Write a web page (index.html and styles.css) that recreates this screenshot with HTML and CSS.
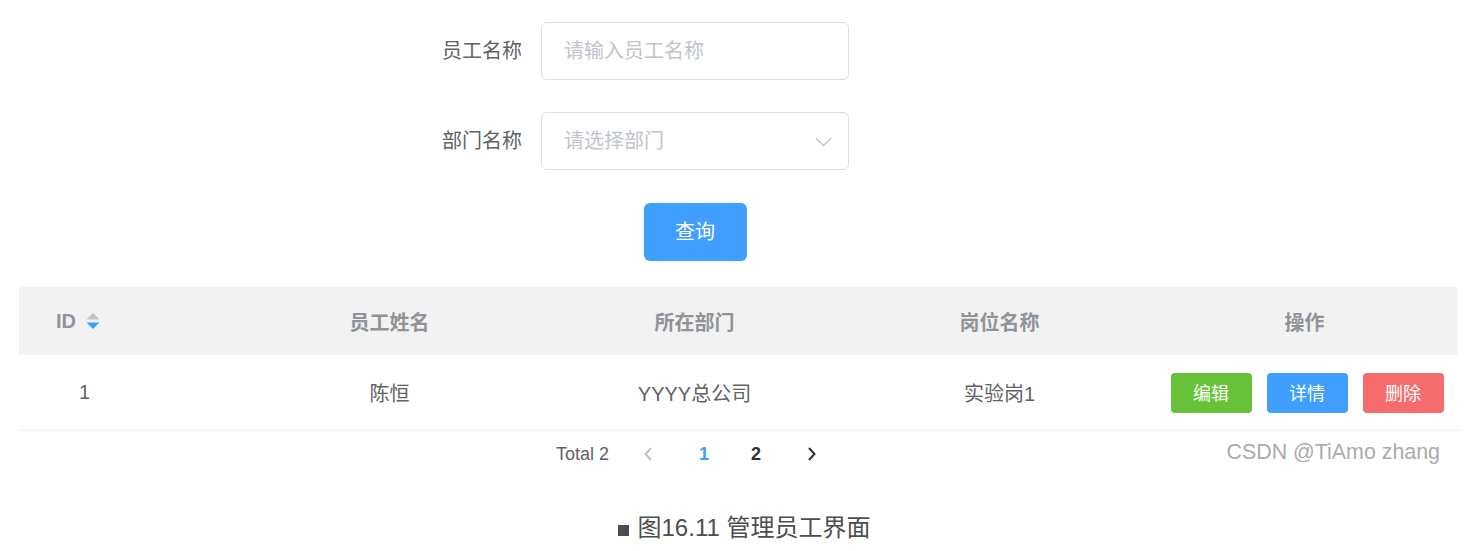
FILE: index.html
```html
<!DOCTYPE html>
<html lang="zh-CN">
<head>
<meta charset="utf-8">
<title>管理员工界面</title>
<link rel="stylesheet" href="styles.css">
</head>
<body>
<div class="page">
  <form class="search">
    <label class="label">员工名称</label>
    <div class="input"><span class="placeholder">请输入员工名称</span></div>
    <label class="label">部门名称</label>
    <div class="input select">
      <span class="placeholder">请选择部门</span>
      <svg class="chevron" width="17" height="10" viewBox="0 0 17 10"><path d="M1 1.2 L8.5 8.5 L16 1.2" fill="none" stroke="#c0c4cc" stroke-width="1.5"/></svg>
    </div>
    <span></span>
    <div class="actions"><button type="button" class="btn-query">查询</button></div>
  </form>

  <div class="table">
    <div class="thead">
      <div class="th th-id">ID
        <span class="sort">
          <svg width="14" height="17" viewBox="0 0 14 17"><path d="M7 0 L13.5 6.5 L0.5 6.5 Z" fill="#c0c4cc"/><path d="M0.5 9.5 L13.5 9.5 L7 16 Z" fill="#409eff"/></svg>
        </span>
      </div>
      <div class="th">员工姓名</div>
      <div class="th">所在部门</div>
      <div class="th">岗位名称</div>
      <div class="th">操作</div>
    </div>
    <div class="tr">
      <div class="td td-id">1</div>
      <div class="td">陈恒</div>
      <div class="td">YYYY总公司</div>
      <div class="td">实验岗1</div>
      <div class="td ops">
        <button type="button" class="btn-sm green">编辑</button>
        <button type="button" class="btn-sm blue">详情</button>
        <button type="button" class="btn-sm red">删除</button>
      </div>
    </div>
  </div>

  <div class="pager-row">
    <div class="pager">
      <span class="total">Total 2</span>
      <span class="nav prev"><svg width="10" height="14" viewBox="0 0 10 14"><path d="M8 1 L2.5 7 L8 13" fill="none" stroke="#c0c4cc" stroke-width="2"/></svg></span>
      <span class="num active">1</span>
      <span class="num">2</span>
      <span class="nav next"><svg width="10" height="14" viewBox="0 0 10 14"><path d="M2 1 L7.5 7 L2 13" fill="none" stroke="#303133" stroke-width="2"/></svg></span>
    </div>
    <span class="watermark">CSDN @TiAmo zhang</span>
  </div>

  <p class="caption"><span class="bullet"></span>图16.11 管理员工界面</p>
</div>
</body>
</html>
```

FILE: styles.css
```css
* { box-sizing: border-box; }

html, body {
  margin: 0;
  padding: 0;
  background: #ffffff;
}

body {
  font-family: "Liberation Sans", "Noto Sans CJK SC", Arial, sans-serif;
  color: #606266;
}

.page {
  width: 1484px;
  height: 551px;
  overflow: hidden;
}

/* search form */
.search {
  margin: 0;
  padding: 22px 0 0 400px;
  display: grid;
  grid-template-columns: 122px 308px;
  grid-auto-rows: 58px;
  column-gap: 19px;
  row-gap: 32px;
}

.label {
  display: flex;
  align-items: center;
  justify-content: flex-end;
  font-size: 20px;
  color: #606266;
  padding-bottom: 4px;
}

.input {
  display: flex;
  align-items: center;
  justify-content: space-between;
  border: 1px solid #dcdfe6;
  border-radius: 6px;
  padding: 0 16px 0 22px;
  font-size: 20px;
}

.placeholder { color: #c0c4cc; padding-bottom: 4px; }

.chevron { display: block; margin-top: 1px; }

.actions {
  display: flex;
  justify-content: center;
  align-items: center;
  padding-top: 2px;
}

.btn-query {
  width: 103px;
  height: 58px;
  border: none;
  border-radius: 6px;
  background: #409eff;
  color: #ffffff;
  font-family: inherit;
  font-size: 20px;
  padding: 0 0 3px 0;
}

/* table */
.table {
  margin: 27px 0 0 19px;
  width: 1438px;
}

.thead, .tr {
  display: grid;
  grid-template-columns: 218px 305px 305px 305px 305px;
}

.thead {
  height: 68px;
  background: #f2f2f2;
}

.th {
  display: flex;
  align-items: center;
  justify-content: center;
  font-size: 20px;
  font-weight: bold;
  color: #909399;
}

.th-id {
  justify-content: flex-start;
  padding-left: 37px;
}

.sort {
  display: inline-flex;
  margin-left: 10px;
  margin-top: 1px;
}

.tr {
  height: 76px;
  border-bottom: 1px solid #ebeef5;
  width: 1441px;
}

.td {
  display: flex;
  align-items: center;
  justify-content: center;
  font-size: 20px;
  color: #606266;
}

.td-id {
  justify-content: flex-start;
  padding-left: 60px;
}

.ops {
  gap: 15px;
  padding-left: 5px;
}

.btn-sm {
  width: 81px;
  height: 40px;
  border: none;
  border-radius: 4px;
  color: #ffffff;
  font-family: inherit;
  font-size: 18px;
  padding: 0 0 2px 0;
}

.green { background: #67c23a; }
.blue { background: #409eff; }
.red { background: #f56c6c; }

/* pagination */
.pager-row {
  display: flex;
  align-items: center;
  height: 46px;
}

.pager {
  display: flex;
  align-items: center;
  margin-left: 556px;
  gap: 8px;
  font-size: 18px;
}

.total {
  color: #606266;
  margin-right: 5px;
}

.nav {
  width: 52px;
  display: flex;
  justify-content: center;
  align-items: center;
}

.nav svg { display: block; }

.num {
  width: 44px;
  text-align: center;
  font-weight: bold;
  color: #303133;
}

.num.active { color: #409eff; }

.watermark {
  margin-left: auto;
  margin-right: 44px;
  font-size: 21.4px;
  color: #ababab;
  margin-top: -4px;
}

/* caption */
.caption {
  margin: 36px 0 0 0;
  padding-left: 4px;
  text-align: center;
  font-size: 24px;
  line-height: 30px;
  color: #4d4d4d;
}

.bullet {
  display: inline-block;
  width: 11px;
  height: 11px;
  background: #4d4d4d;
  margin-right: 9px;
  vertical-align: 0;
}
```
